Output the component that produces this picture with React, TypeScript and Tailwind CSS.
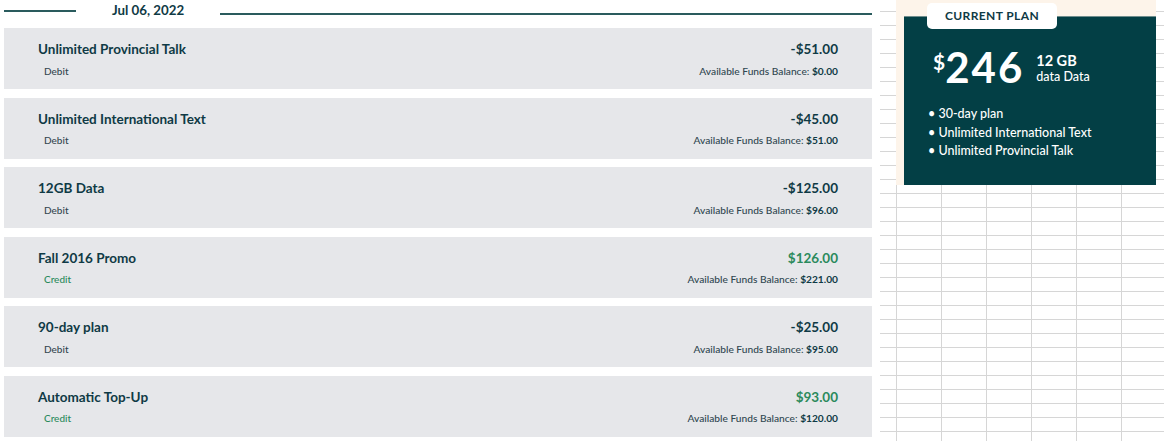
import React from "react";

type Txn = {
  title: string;
  kind: "Debit" | "Credit";
  amount: string;
  balance: string;
};

const txns: Txn[] = [
  { title: "Unlimited Provincial Talk", kind: "Debit", amount: "-$51.00", balance: "$0.00" },
  { title: "Unlimited International Text", kind: "Debit", amount: "-$45.00", balance: "$51.00" },
  { title: "12GB Data", kind: "Debit", amount: "-$125.00", balance: "$96.00" },
  { title: "Fall 2016 Promo", kind: "Credit", amount: "$126.00", balance: "$221.00" },
  { title: "90-day plan", kind: "Debit", amount: "-$25.00", balance: "$95.00" },
  { title: "Automatic Top-Up", kind: "Credit", amount: "$93.00", balance: "$120.00" },
];

function TxnCard({ t }: { t: Txn }) {
  const credit = t.kind === "Credit";
  return (
    <div className="flex h-[61px] justify-between bg-[#e6e7ea] pl-[34px] pr-[34px] pt-[13px]">
      <div className="flex flex-col">
        <div className="text-[13.5px] font-bold leading-4 text-[#0f3a45]">{t.title}</div>
        <div
          className={`ml-[6px] mt-[7.5px] text-[10px] font-medium leading-[12px] ${
            credit ? "text-[#2b8a5c]" : "text-[#34464f]"
          }`}
        >
          {t.kind}
        </div>
      </div>
      <div className="flex flex-col items-end">
        <div
          className={`text-[13.5px] font-bold leading-4 ${credit ? "text-[#2b8a5c]" : "text-[#0f3a45]"}`}
        >
          {t.amount}
        </div>
        <div className="mt-[7.5px] text-[10.2px] font-medium leading-[12px] text-[#2f4650]">
          Available Funds Balance: <span className="font-bold text-[#0f3a45]">{t.balance}</span>
        </div>
      </div>
    </div>
  );
}

function CurrentPlan() {
  return (
    <div className="relative ml-[16px] h-[185px] w-[260px] bg-[#fdf4ea] pl-[8px] pt-[16px]">
      <div className="h-full border-t border-[#6f8d8d] bg-[#033f45] pl-[24px] pt-[32px] text-white">
        <div className="ml-[5px] flex items-start">
          <span className="mt-[2px] text-[21px] font-bold leading-none">$</span>
          <span className="text-[42px] font-bold leading-[36px] tracking-[2px]">246</span>
          <div className="ml-[12px] mt-[4px] flex flex-col">
            <span className="text-[14.5px] font-bold leading-[15px]">12 GB</span>
            <span className="mt-[1px] text-[12.5px] font-medium leading-[15px]">data Data</span>
          </div>
        </div>
        <ul className="mt-[20px] flex flex-col text-[12.5px] font-medium leading-[18.5px]">
          <li>• 30-day plan</li>
          <li>• Unlimited International Text</li>
          <li>• Unlimited Provincial Talk</li>
        </ul>
      </div>
      <div className="absolute left-[31px] top-[3px] flex h-[26px] w-[130px] items-center justify-center rounded-[5px] bg-white text-[12px] font-bold tracking-[0.4px] text-[#0f3a45]">
        CURRENT PLAN
      </div>
    </div>
  );
}

export default function App() {
  return (
    <div className="flex min-h-screen bg-white font-['Lato','Noto_Sans',sans-serif]">
      <div className="flex w-[880px] flex-col pl-[4px] pr-[8px]">
        <div className="flex h-[28px] items-start">
          <div className="mt-[9.5px] h-[2px] w-[72px] bg-[#2a5b5d]" />
          <div className="ml-[36px] text-[13.3px] font-bold leading-5 text-[#0f3a45]">Jul 06, 2022</div>
          <div className="ml-[36px] mt-[12.5px] h-[2px] flex-1 bg-[#2a5b5d]" />
        </div>
        <div className="flex flex-col gap-[8.5px]">
          {txns.map((t) => (
            <TxnCard key={t.title} t={t} />
          ))}
        </div>
      </div>
      <div className="flex-1 [background-image:linear-gradient(#d6d6d6_1px,transparent_1px),linear-gradient(90deg,#d6d6d6_1px,transparent_1px)] [background-position:0_11px,16px_0] [background-size:100%_14px,45px_100%]">
        <CurrentPlan />
      </div>
    </div>
  );
}
